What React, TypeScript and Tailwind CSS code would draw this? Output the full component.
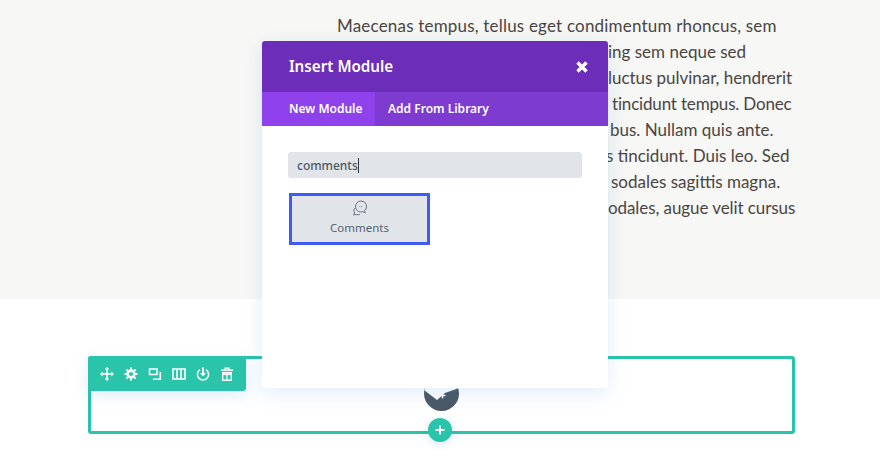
import React from "react";

const lines = [
  { text: "Maecenas tempus, tellus eget condimentum rhoncus, sem", cls: "pl-[337px] tracking-[0.19px]" },
  { text: "ing sem neque sed", cls: "pl-[608px]" },
  { text: "luctus pulvinar, hendrerit", cls: "pl-[608px] tracking-[-0.04px]" },
  { text: "tincidunt tempus. Donec", cls: "pl-[612px] tracking-[-0.17px]" },
  { text: "bus. Nullam quis ante.", cls: "pl-[610px]" },
  { text: "s tincidunt. Duis leo. Sed", cls: "pl-[606px]" },
  { text: "sodales sagittis magna.", cls: "pl-[611px]" },
  { text: "odales, augue velit cursus", cls: "pl-[608px] tracking-[-0.08px]" },
];

const ToolIcon = ({ children }: { children: React.ReactNode }) => (
  <svg width="14" height="14" viewBox="0 0 14 14" fill="none" stroke="white" strokeWidth="2">
    {children}
  </svg>
);

const App: React.FC = () => {
  return (
    <div className="relative h-[465px] w-[880px] overflow-hidden bg-white font-['Noto_Sans',sans-serif]">
      <div className="h-[299px] bg-[#f7f7f5] pt-[13px] font-['Lato',sans-serif] text-[17px] leading-[26px] text-[#4a4543]">
        {lines.map((line) => (
          <p key={line.text} className={`whitespace-nowrap ${line.cls}`}>
            {line.text}
          </p>
        ))}
      </div>

      <div className="relative ml-[88px] mt-[57px] h-[78px] w-[707px] rounded-[3px] border-[3px] border-[#29c4a9]">
        <div className="absolute left-[-3px] top-[-3px] flex h-[35px] w-[158px] items-center gap-[10px] rounded-[3px] bg-[#29c4a9] pl-[12px] shadow-[0_5px_15px_rgba(43,135,218,0.15)]">
          <ToolIcon>
            <path d="M7 1v12M1 7h12" strokeWidth="1.6" />
            <path d="M7 0l2.4 2.6H4.6zM7 14l2.4-2.6H4.6zM0 7l2.6-2.4v4.8zM14 7l-2.6-2.4v4.8z" fill="white" stroke="none" />
          </ToolIcon>
          <ToolIcon>
            <circle cx="7" cy="7" r="3.4" strokeWidth="2.6" />
            <path d="M7 0.5v2.4M7 11.1v2.4M0.5 7h2.4M11.1 7h2.4M2.4 2.4l1.7 1.7M9.9 9.9l1.7 1.7M2.4 11.6l1.7-1.7M9.9 4.1l1.7-1.7" strokeWidth="2" />
          </ToolIcon>
          <ToolIcon>
            <path d="M1.5 2h7.5v5.5H1.5z" strokeWidth="1.6" />
            <path d="M12.3 5v7.3H5" strokeWidth="1.6" />
          </ToolIcon>
          <ToolIcon>
            <path d="M1 2h12v10H1zM5 2v10M9 2v10" strokeWidth="1.6" />
          </ToolIcon>
          <ToolIcon>
            <path d="M4 2.6a5.6 5.6 0 1 0 6 0" strokeWidth="1.6" />
            <path d="M7 0.5v7" strokeWidth="2" />
            <path d="M4 6l3 3.4L10 6z" fill="white" stroke="none" />
          </ToolIcon>
          <ToolIcon>
            <path d="M1 3.2h12" strokeWidth="1.5" />
            <path d="M5 3V1.2h4V3" strokeWidth="1.2" />
            <path d="M2.7 5.6h8.6v7.6H2.7z" strokeWidth="1.4" />
            <path d="M2.7 7.2h8.6" strokeWidth="1.8" />
            <path d="M7 8v5" strokeWidth="1.2" />
          </ToolIcon>
        </div>
        <div className="absolute left-[333px] top-[17px] h-[35px] w-[35px] overflow-hidden rounded-full bg-[#4c5866]">
          <svg width="35" height="35" viewBox="0 0 35 35" fill="white">
            <path d="M0 14L13 24L21 17L35 12V0H0Z" />
            <path d="M18.5 16.5v6M15.5 19.5h6" stroke="white" strokeWidth="1.4" />
          </svg>
        </div>
        <div className="absolute left-[337px] top-[59px] flex h-[24px] w-[24px] items-center justify-center rounded-full bg-[#29c4a9] shadow-[0_2px_8px_rgba(43,135,218,0.2)]">
          <svg width="10" height="10" viewBox="0 0 10 10" stroke="white" strokeWidth="2">
            <path d="M5 0.5v9M0.5 5h9" />
          </svg>
        </div>
      </div>

      <div className="absolute left-[262px] top-[41px] h-[347px] w-[346px] overflow-hidden rounded-[3px] bg-white shadow-[0_5px_20px_rgba(43,135,218,0.15)]">
        <div className="flex h-[51px] items-center justify-between bg-[#6c2eb9] pl-[27px] pr-[20px]">
          <span className="text-[15.2px] font-semibold text-white">Insert Module</span>
          <svg width="12" height="12" viewBox="0 0 12 12" stroke="white" strokeWidth="3.4">
            <path d="M1.5 1.5l9 9M10.5 1.5l-9 9" />
          </svg>
        </div>
        <div className="flex h-[34px] items-center bg-[#7e3bd0] text-[12px] font-semibold text-white">
          <div className="flex h-full w-[113px] items-center bg-[#8f42ec] pl-[27px]">New Module</div>
          <div className="pl-[13px]">Add From Library</div>
        </div>
        <div className="px-[26px] pt-[26px]">
          <div className="flex h-[26px] w-[294px] items-center rounded-[3px] bg-[#e1e5ea] pl-[9px] pt-px text-[12px] font-medium text-[#4c5866]">
            comments<span className="h-[15px] w-px bg-[#32373c]" />
          </div>
          <div className="ml-px mt-[15px] flex h-[52px] w-[141px] flex-col items-center justify-center gap-[3px] border-[3px] border-[#3f5bf5] bg-[#e1e5ea] pb-[2px] text-[11.5px] text-[#56616e]">
            <svg width="16" height="16" viewBox="0 0 16 16" fill="none" stroke="#6b7684" strokeWidth="1">
              <path d="M9 1a5.5 5.5 0 0 1 3.6 9.7l0.6 2-2.4-1A5.5 5.5 0 1 1 9 1z" />
              <path d="M3.5 7.5a4 4 0 0 0-1 5.5l-1 2 2.4-0.6a4 4 0 0 0 4-0.2" />
              <path d="M7.5 6.5h3" strokeDasharray="0.8 0.8" />
            </svg>
            <span>Comments</span>
          </div>
        </div>
      </div>
    </div>
  );
};

export default App;
